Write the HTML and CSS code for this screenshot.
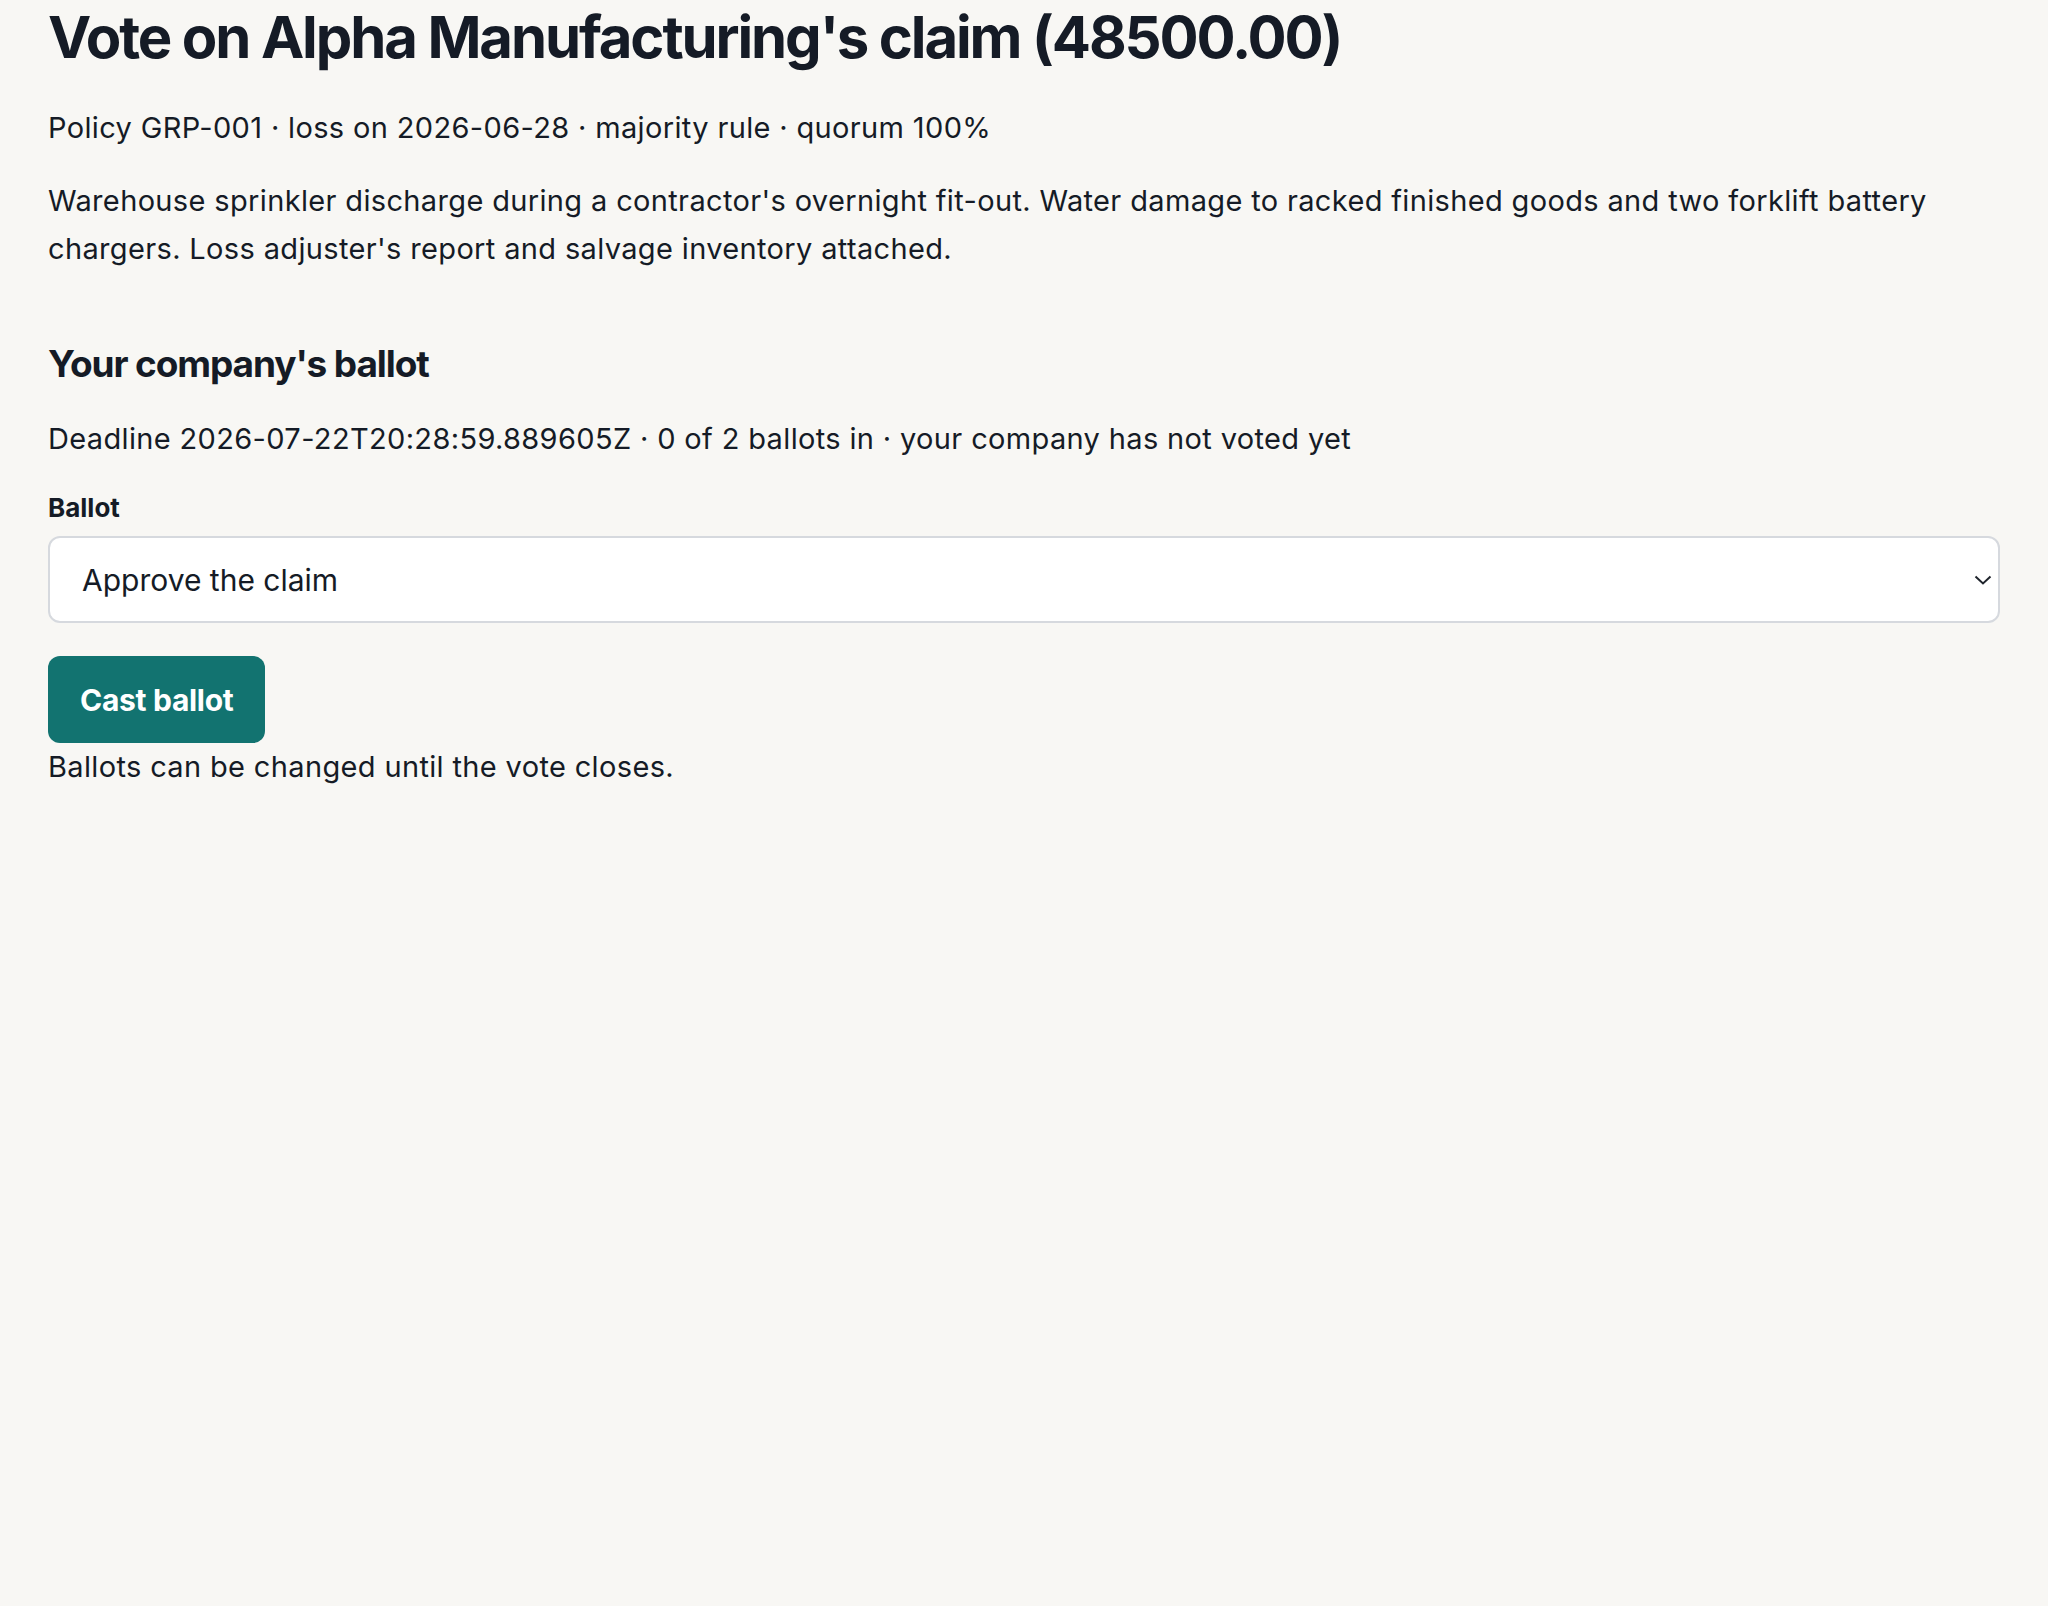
FILE: index.html
```html
<!DOCTYPE html>
<html>
<head>
  <title>Vote on claim</title>
  <link rel="stylesheet" href="styles.css">
</head>
<body>
  <main class="page">
    <h1 class="title">Vote on Alpha Manufacturing's claim (48500.00)</h1>
    <p class="meta">Policy GRP-001 · loss on 2026-06-28 · majority rule · quorum 100%</p>
    <p class="description">Warehouse sprinkler discharge during a contractor's overnight fit-out. Water damage to racked finished goods and two forklift battery chargers. Loss adjuster's report and salvage inventory attached.</p>

    <section class="ballot">
      <h2 class="ballot-title">Your company's ballot</h2>
      <p class="status">Deadline 2026-07-22T20:28:59.889605Z · 0 of 2 ballots in · your company has not voted yet</p>

      <form class="ballot-form">
        <label class="field-label" for="choice">Ballot</label>
        <div class="select-wrap">
          <select id="choice" class="select">
            <option>Approve the claim</option>
            <option>Reject the claim</option>
            <option>Abstain</option>
          </select>
          <svg class="chevron" width="18" height="10" viewBox="0 0 18 10">
            <polyline points="1.5,1.5 9,8.5 16.5,1.5" fill="none" stroke="#1f242c" stroke-width="2"/>
          </svg>
        </div>
        <button type="button" class="cast-btn">Cast ballot</button>
        <p class="hint">Ballots can be changed until the vote closes.</p>
      </form>
    </section>
  </main>
</body>
</html>
```

FILE: styles.css
```css
body {
  margin: 0;
  background-color: #f8f7f4;
  color: #151b26;
  font-family: Inter, "Liberation Sans", sans-serif;
  font-size: 29px;
  line-height: 48px;
  letter-spacing: 0.35px;
}

.page {
  padding: 2px 48px 48px;
}

.title {
  margin: 0 0 32px;
  font-size: 58px;
  line-height: 70px;
  font-weight: 700;
  letter-spacing: -2.1px;
}

.meta {
  margin: 0 0 25px;
}

.description {
  margin: 0;
}

.ballot {
  margin-top: 68px;
}

.ballot-title {
  margin: 0 0 29px;
  font-size: 37px;
  line-height: 45px;
  font-weight: 700;
  letter-spacing: -1.1px;
}

.status {
  margin: 0 0 23px;
}

.ballot-form {
  display: flex;
  flex-direction: column;
  align-items: flex-start;
}

.field-label {
  font-size: 26px;
  line-height: 43px;
  font-weight: 700;
  letter-spacing: 0;
  margin-bottom: 7px;
}

.select-wrap {
  position: relative;
  align-self: stretch;
  margin-bottom: 33px;
}

.select {
  width: 100%;
  height: 87px;
  padding: 0 60px 0 32px;
  font-family: inherit;
  font-size: 30px;
  letter-spacing: 0;
  color: #151b26;
  background-color: #fff;
  border: 2px solid #d6d9de;
  border-radius: 12px;
  appearance: none;
  -webkit-appearance: none;
}

.chevron {
  position: absolute;
  right: 8px;
  top: 39px;
  pointer-events: none;
}

.cast-btn {
  height: 87px;
  padding: 0 32px;
  font-family: inherit;
  font-size: 30px;
  font-weight: 700;
  letter-spacing: -0.3px;
  color: #fff;
  background-color: #127370;
  border: none;
  border-radius: 12px;
  cursor: pointer;
}

.hint {
  margin: 0;
}
```
